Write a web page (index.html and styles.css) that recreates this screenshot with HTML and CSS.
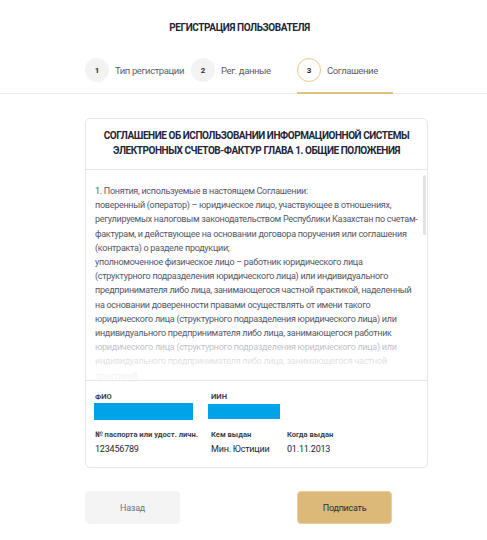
FILE: index.html
```html
<!DOCTYPE html>
<html lang="ru">
<head>
<meta charset="utf-8">
<title>Регистрация пользователя</title>
<link rel="stylesheet" href="styles.css">
</head>
<body>
<div class="page">
  <h1 class="title">Регистрация пользователя</h1>
  <nav class="steps-bar">
    <div class="steps">
      <div class="step"><span class="num">1</span><span class="label">Тип регистрации</span></div>
      <div class="step"><span class="num">2</span><span class="label">Рег. данные</span></div>
      <div class="step active"><span class="num">3</span><span class="label">Соглашение</span></div>
    </div>
  </nav>
  <main class="content">
    <section class="card">
      <header class="card-head">Соглашение об использовании информационной системы электронных счетов-фактур глава 1. Общие положения</header>
      <div class="card-body">
        <div class="agreement">
          <p>1. Понятия, используемые в настоящем Соглашении:<br>
          поверенный (оператор) – юридическое лицо, участвующее в отношениях,<br>
          регулируемых налоговым законодательством Республики Казахстан по счетам-<br>
          фактурам, и действующее на основании договора поручения или соглашения<br>
          (контракта) о разделе продукции;<br>
          уполномоченное физическое лицо – работник юридического лица<br>
          (структурного подразделения юридического лица) или индивидуального<br>
          предпринимателя либо лица, занимающегося частной практикой, наделенный<br>
          на основании доверенности правами осуществлять от имени такого<br>
          юридического лица (структурного подразделения юридического лица) или<br>
          индивидуального предпринимателя либо лица, занимающегося работник<br>
          юридического лица (структурного подразделения юридического лица) или<br>
          индивидуального предпринимателя либо лица, занимающегося частной<br>
          практикой,</p>
        </div>
        <div class="fade"></div>
        <div class="scrollbar"></div>
      </div>
      <div class="card-foot">
        <div class="row">
          <div class="field f-name"><div class="f-label">ФИО</div><div class="mask mask-name"></div></div>
          <div class="field f-iin"><div class="f-label">ИИН</div><div class="mask mask-iin"></div></div>
        </div>
        <div class="row row2">
          <div class="field f-name"><div class="f-label">№ паспорта или удост. личн.</div><div class="f-value">123456789</div></div>
          <div class="field f-who"><div class="f-label">Кем выдан</div><div class="f-value">Мин. Юстиции</div></div>
          <div class="field"><div class="f-label">Когда выдан</div><div class="f-value">01.11.2013</div></div>
        </div>
      </div>
    </section>
    <div class="actions">
      <button class="btn btn-back" type="button">Назад</button>
      <button class="btn btn-sign" type="button">Подписать</button>
    </div>
  </main>
</div>
</body>
</html>
```

FILE: styles.css
```css
* { box-sizing: border-box; }
html, body { margin: 0; padding: 0; background: #fff; }
body {
  font-family: Roboto, "Noto Sans", "Liberation Sans", sans-serif;
  color: #1f2637;
  width: 487px;
}
.title {
  margin: 0;
  padding-top: 21px;
  height: 58px;
  font-size: 10px;
  line-height: 14px;
  font-weight: 700;
  text-transform: uppercase;
  text-align: center;
  color: #1f2637;
  padding-right: 8px;
  letter-spacing: -0.4px;
}
.steps-bar {
  border-bottom: 1px solid #ececec;
}
.steps {
  display: flex;
  gap: 10px;
  padding-left: 85px;
}
.step {
  width: 96px;
  display: flex;
  align-items: center;
  gap: 6px;
  padding-bottom: 10px;
  border-bottom: 2px solid transparent;
  margin-bottom: -1px;
}
.step.active {
  border-bottom-color: #e3c07c;
}
.num {
  width: 24px;
  height: 24px;
  border-radius: 50%;
  background: #f3f3f4;
  display: flex;
  align-items: center;
  justify-content: center;
  font-size: 8px;
  font-weight: 700;
  color: #2a3040;
  flex: none;
}
.step.active .num {
  background: #fff;
  border: 1px solid #e6c88c;
}
.label {
  font-size: 9.5px;
  letter-spacing: -0.4px;
  color: #5b606b;
  white-space: nowrap;
}
.content {
  padding-left: 85px;
  padding-top: 24px;
}
.card {
  width: 343px;
  border: 1px solid #e6e6e8;
  border-radius: 5px;
  background: #fff;
}
.card-head {
  padding: 9px 8px 11px;
  border-bottom: 1px solid #e6e6e8;
  text-align: center;
  text-transform: uppercase;
  font-weight: 700;
  font-size: 10px;
  letter-spacing: -0.45px;
  line-height: 15px;
  color: #1f2637;
}
.card-body {
  position: relative;
  height: 211px;
  overflow: hidden;
  border-bottom: 1px solid #e6e6e8;
}
.agreement {
  padding: 14px 0 0 9px;
}
.agreement p {
  margin: 0;
  font-size: 9px;
  letter-spacing: -0.28px;
  line-height: 14.2px;
  color: #525866;
  white-space: nowrap;
}
.fade {
  position: absolute;
  left: 0;
  right: 0;
  bottom: 0;
  height: 46px;
  background: linear-gradient(to bottom, rgba(255,255,255,0) 0%, rgba(255,255,255,0.6) 25%, rgba(255,255,255,0.82) 60%, rgba(255,255,255,0.95) 100%);
}
.scrollbar {
  position: absolute;
  right: 1px;
  top: 5px;
  width: 3px;
  height: 60px;
  border-radius: 2px;
  background: #e2e2e4;
}
.card-foot {
  padding: 11px 9px 10px;
  height: 86px;
}
.row {
  display: flex;
}
.row2 {
  margin-top: 10px;
}
.field.f-name { width: 116px; }
.field.f-iin { width: 100px; }
.field.f-who { width: 76px; }
.f-label {
  font-size: 7.6px;
  font-weight: 700;
  color: #3a3f4c;
  line-height: 10px;
}
.f-value {
  font-size: 9px;
  letter-spacing: -0.2px;
  color: #222734;
  line-height: 12px;
  margin-top: 3px;
}
.mask {
  background: #00a3e8;
  margin-top: 1px;
}
.mask-name { width: 99px; height: 17px; margin-left: -1px; }
.mask-iin { width: 72px; height: 15px; margin-left: -3px; margin-top: 2px; }
.actions {
  display: flex;
  justify-content: space-between;
  width: 307px;
  margin-top: 23px;
}
.btn {
  width: 95px;
  height: 33px;
  border-radius: 4px;
  font-family: inherit;
  font-size: 9px;
  letter-spacing: -0.25px;
  cursor: pointer;
}
.btn-back {
  background: #f4f4f5;
  border: 1px solid #f4f4f5;
  color: #6f7480;
}
.btn-sign {
  background: #dcb978;
  border: 1px solid #e8cfa0;
  color: #2a2f3a;
}
```
